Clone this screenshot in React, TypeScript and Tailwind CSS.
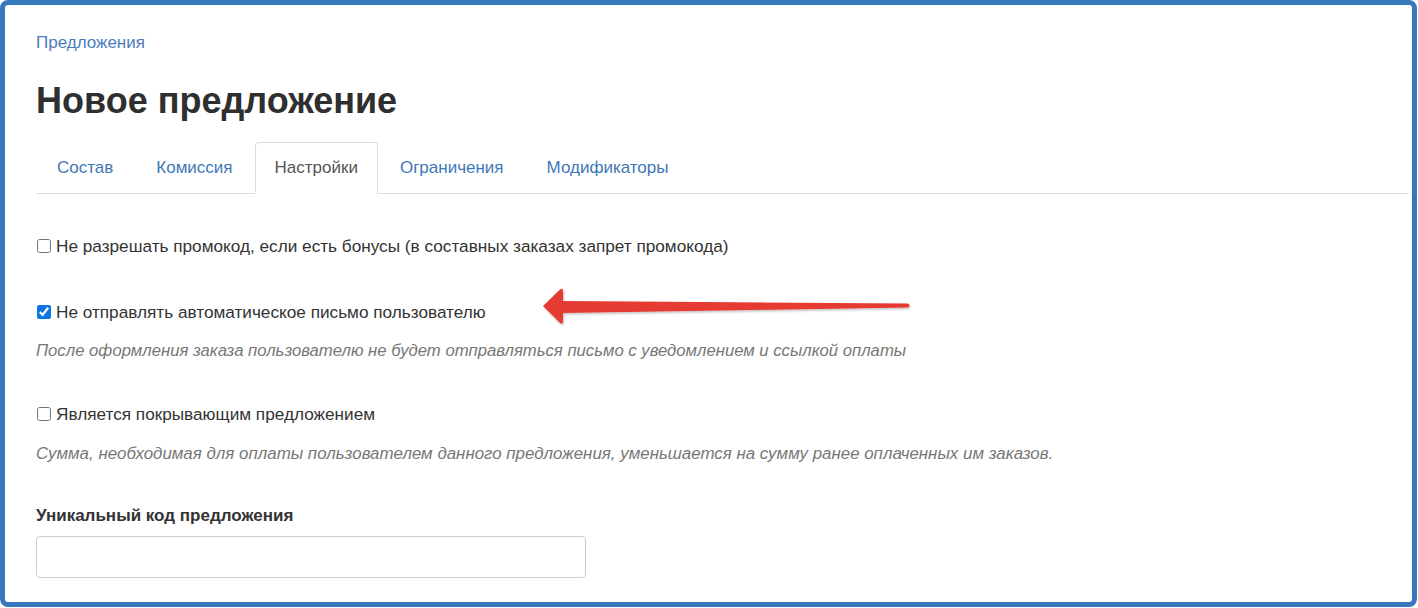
const tabs = ['Состав', 'Комиссия', 'Настройки', 'Ограничения', 'Модификаторы']

// красная стрелка поверх формы
function Arrow() {
  return (
    <svg
      className="absolute left-[528px] top-[276px] pointer-events-none"
      width="384"
      height="50"
      viewBox="0 0 384 50"
    >
      <defs>
        <filter id="sh" x="-5%" y="-30%" width="110%" height="160%">
          <feDropShadow dx="1" dy="1.5" stdDeviation="1" floodColor="#000" floodOpacity="0.25" />
        </filter>
      </defs>
      <path
        d="M10 25 L27 8.5 Q30 6.5 30 10 L30 20 L375 22.5 Q378 24.5 375 26.5 L30 32 L30 40 Q30 44 27 42 Z"
        fill="#e53b30"
        filter="url(#sh)"
      />
    </svg>
  )
}

function Check({ checked, label }: { checked?: boolean; label: string }) {
  return (
    <label className="flex items-center gap-[5px] text-[17.2px] leading-[24px] text-[#333]">
      <input type="checkbox" defaultChecked={checked} className="w-[14px] h-[14px] m-0 ml-[1px] accent-[#0b75e6]" />
      <span>{label}</span>
    </label>
  )
}

export default function App() {
  return (
    <div
      className="w-[1417px] h-[607px] border-[5px] border-[#3778bd] rounded-[8px] bg-white relative overflow-hidden"
      style={{ fontFamily: '"Liberation Sans", Arial, sans-serif' }}
    >
      <div className="pl-[31px] pr-[3px] pt-[28px]">
        <a className="block text-[17px] leading-[20px] text-[#4d7cbc]">Предложения</a>
        <h1 className="mt-[30px] text-[36px] font-bold text-[#2f2f2f] leading-[36px]">Новое предложение</h1>
        <div className="mt-[23px] flex border-b border-[#dcdcdc] h-[52px]">
          {tabs.map((t) => (
            <div
              key={t}
              className={
                t === 'Настройки'
                  ? 'px-[19px] mr-[1px] flex items-center border border-[#dcdcdc] border-b-white -mb-px rounded-t-[4px] bg-white text-[#555] text-[17px]'
                  : 'px-[20px] mr-[1px] flex items-center border border-transparent -mb-px text-[#3f78b8] text-[17px]'
              }
            >
              {t}
            </div>
          ))}
        </div>
        <div className="pt-[40px] flex flex-col">
          <Check label="Не разрешать промокод, если есть бонусы (в составных заказах запрет промокода)" />
          <div className="mt-[42px]">
            <Check checked label="Не отправлять автоматическое письмо пользователю" />
          </div>
          <p className="mt-[15px] text-[16.7px] leading-[24px] italic text-[#777]">
            После оформления заказа пользователю не будет отправляться письмо с уведомлением и ссылкой оплаты
          </p>
          <div className="mt-[39px]">
            <Check label="Является покрывающим предложением" />
          </div>
          <p className="mt-[16px] text-[16.9px] leading-[24px] italic text-[#777]">
            Сумма, необходимая для оплаты пользователем данного предложения, уменьшается на сумму ранее оплаченных им заказов.
          </p>
          <label className="mt-[38px] text-[17px] leading-[24px] font-bold text-[#333]">Уникальный код предложения</label>
          <input className="mt-[8px] w-[550px] h-[42px] border border-[#ccc] rounded-[4px]" />
        </div>
      </div>
      <Arrow />
    </div>
  )
}
